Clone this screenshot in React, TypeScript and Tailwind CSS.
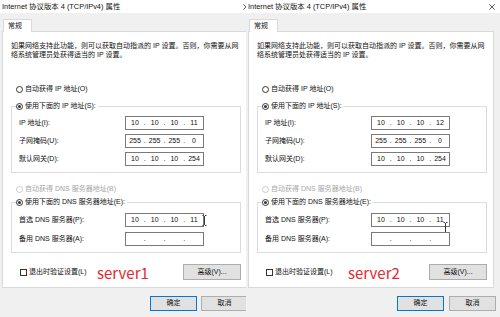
import { Fragment } from "react";

type DialogProps = {
  ip: string[];
  dns1: string[];
  label: string;
  cursor: "in" | "below";
  right?: boolean;
};

function Radio({ checked, disabled }: { checked?: boolean; disabled?: boolean }) {
  return (
    <span
      className={`flex h-[7px] w-[7px] shrink-0 items-center justify-center rounded-full border bg-white ${
        disabled ? "border-[#cccccc]" : "border-[#333333]"
      }`}
    >
      {checked && <span className="h-[3px] w-[3px] rounded-full bg-[#333333]" />}
    </span>
  );
}

function RadioRow({ label, checked, disabled }: { label: string; checked?: boolean; disabled?: boolean }) {
  return (
    <div className={`flex h-[10px] items-center gap-[2px] ${disabled ? "text-[#a6a6a6]" : ""}`}>
      <Radio checked={checked} disabled={disabled} />
      <span>{label}</span>
    </div>
  );
}

function IBeam({ className }: { className: string }) {
  return (
    <svg className={className} width="5" height="11" viewBox="0 0 5 11" fill="none">
      <path d="M0.5 0.5h1.5M3 0.5h1.5M2.5 1v9M0.5 10.5h1.5M3 10.5h1.5" stroke="#222" strokeWidth="0.9" />
    </svg>
  );
}

function IpBox({ parts, cursor }: { parts: string[]; cursor?: "in" | "below" }) {
  return (
    <div className="relative flex h-[14px] w-[79px] items-center justify-between border border-[#7a7a7a] bg-white px-[3px]">
      {parts.map((p, i) => (
        <Fragment key={i}>
          {i > 0 && <span className="w-[4px] text-center">.</span>}
          <span className="w-[12px] text-center">{p}</span>
        </Fragment>
      ))}
      {cursor === "in" && <IBeam className="absolute right-[-4px] top-[1px]" />}
      {cursor === "below" && <IBeam className="absolute right-[1px] top-[8px]" />}
    </div>
  );
}

function Row({ label, children }: { label: string; children: React.ReactNode }) {
  return (
    <div className="flex items-center">
      <span className="w-[113px] pl-[7px]">{label}</span>
      {children}
    </div>
  );
}

function Dialog({ ip, dns1, label, cursor, right }: DialogProps) {
  return (
    <div className="flex h-[317px] w-[254px] shrink-0 flex-col bg-[#f0f0f0] text-[7px] text-[#111111]">
      <div className="flex h-[13px] shrink-0 items-center justify-between bg-white pl-[2px] pr-[5px] text-[7.4px]">
        <span>Internet 协议版本 4 (TCP/IPv4) 属性</span>
        <svg width="6" height="6" viewBox="0 0 6 6">
          <path d="M0.3 0.3L5.7 5.7M5.7 0.3L0.3 5.7" stroke="#333" strokeWidth="0.8" />
        </svg>
      </div>

      <div className="relative z-10 -mb-px ml-[3px] mt-[6px] flex h-[13px] w-[29px] items-center border border-b-0 border-[#d9d9d9] bg-white pl-[4px]">
        常规
      </div>

      <div className="ml-[2px] w-[246px] border border-[#d9d9d9] bg-white pb-[7px]">
        <p className="ml-[8px] mt-[10px] whitespace-nowrap leading-[8.5px]">
          如果网络支持此功能，则可以获取自动指派的 IP 设置。否则，你需要从网
          <br />
          络系统管理员处获得适当的 IP 设置。
        </p>

        <div className="ml-[13px] mt-[25px]">
          <RadioRow label="自动获得 IP 地址(O)" />
        </div>

        <fieldset className="ml-[8px] mt-[7px] w-[230px] border border-[#dcdcdc] pb-[6px]">
          <legend className="ml-[4px] pr-[2px]">
            <RadioRow checked label="使用下面的 IP 地址(S):" />
          </legend>
          <div className="mt-[5px] flex flex-col gap-[4px]">
            <Row label="IP 地址(I):">
              <IpBox parts={ip} />
            </Row>
            <Row label="子网掩码(U):">
              <IpBox parts={["255", "255", "255", "0"]} />
            </Row>
            <Row label="默认网关(D):">
              <IpBox parts={["10", "10", "10", "254"]} />
            </Row>
          </div>
        </fieldset>

        <div className="ml-[13px] mt-[11px]">
          <RadioRow disabled label="自动获得 DNS 服务器地址(B)" />
        </div>

        <fieldset className="ml-[8px] mt-[3px] w-[230px] border border-[#dcdcdc] pb-[6px]">
          <legend className="ml-[4px] pr-[2px]">
            <RadioRow checked label="使用下面的 DNS 服务器地址(E):" />
          </legend>
          <div className="mt-[6px] flex flex-col gap-[5px]">
            <Row label="首选 DNS 服务器(P):">
              <IpBox parts={dns1} cursor={cursor} />
            </Row>
            <Row label="备用 DNS 服务器(A):">
              <IpBox parts={["", "", "", ""]} />
            </Row>
          </div>
        </fieldset>

        <div className="mt-[11px] flex h-[16px] items-center pl-[17px] pr-[6px]">
          <div className={`flex items-center gap-[2px] ${right ? "w-[82px]" : "w-[77px]"}`}>
            <span className="h-[7px] w-[7px] shrink-0 border border-[#333333] bg-white" />
            <span className="whitespace-nowrap">退出时验证设置(L)</span>
          </div>
          <span className="flex-1 font-['Noto_Sans_CJK_SC','Noto_Sans',sans-serif] text-[15px] leading-none text-[#e8262d]">
            {label}
          </span>
          <div className="flex h-[16px] w-[58px] items-center justify-center border border-[#adadad] bg-[#e1e1e1]">
            高级(V)...
          </div>
        </div>
      </div>

      <div className={`mt-[8px] flex ${right ? "gap-[5px] pl-[151px]" : "gap-[4px] pl-[150px]"}`}>
        <div className="flex h-[15px] w-[47px] items-center justify-center border border-[#0078d7] bg-[#e1e1e1]">
          确定
        </div>
        <div className="flex h-[15px] w-[47px] items-center justify-center border border-[#adadad] bg-[#e1e1e1]">
          取消
        </div>
      </div>
    </div>
  );
}

export default function App() {
  return (
    <div className="flex h-[317px] w-[500px] overflow-hidden bg-[#f0f0f0] font-['Liberation_Sans','Noto_Sans_CJK_SC',sans-serif]">
      <div className="w-[246px] shrink-0 overflow-hidden">
        <Dialog ip={["10", "10", "10", "11"]} dns1={["10", "10", "10", "11"]} label="server1" cursor="in" />
      </div>
      <Dialog ip={["10", "10", "10", "12"]} dns1={["10", "10", "10", "11"]} label="server2" cursor="below" right />
    </div>
  );
}
